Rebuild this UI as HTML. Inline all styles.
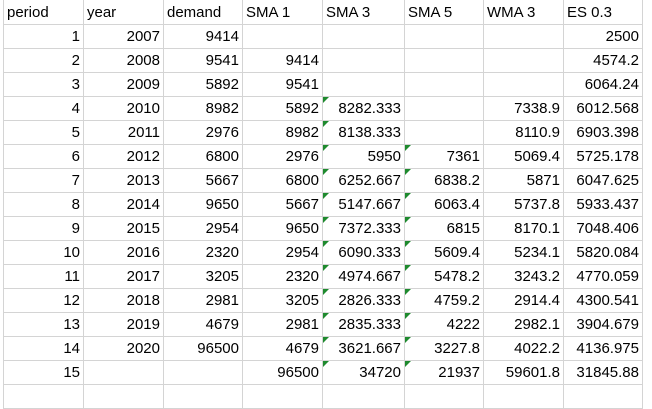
<!DOCTYPE html><html><head><style>
body{margin:0;width:652px;height:408px;overflow:hidden;background:#fff;font-family:"Liberation Sans",Arial,sans-serif;font-size:15px;color:#000}
table{border-collapse:collapse;position:absolute;left:3px;top:0;table-layout:fixed}
tr{height:24px}
td{border:1px solid #d4d4d4;height:24px;padding:2px 3px 0 3px;text-align:right;white-space:nowrap;position:relative;overflow:hidden;box-sizing:border-box;line-height:20px}
tr:first-child td{text-align:left;border-top:none}
td.g::before{content:"";position:absolute;left:0;top:0;border-top:6px solid #1e8a2e;border-right:6px solid transparent}
</style></head><body>
<table>
<colgroup><col style="width:80px"><col style="width:80px"><col style="width:79px"><col style="width:80px"><col style="width:82px"><col style="width:79px"><col style="width:80px"><col style="width:79px"></colgroup>
<tr><td>period</td><td>year</td><td>demand</td><td>SMA 1</td><td>SMA 3</td><td>SMA 5</td><td>WMA 3</td><td>ES 0.3</td></tr>
<tr><td>1</td><td>2007</td><td>9414</td><td></td><td></td><td></td><td></td><td>2500</td></tr>
<tr><td>2</td><td>2008</td><td>9541</td><td>9414</td><td></td><td></td><td></td><td>4574.2</td></tr>
<tr><td>3</td><td>2009</td><td>5892</td><td>9541</td><td></td><td></td><td></td><td>6064.24</td></tr>
<tr><td>4</td><td>2010</td><td>8982</td><td>5892</td><td class="g">8282.333</td><td></td><td>7338.9</td><td>6012.568</td></tr>
<tr><td>5</td><td>2011</td><td>2976</td><td>8982</td><td class="g">8138.333</td><td></td><td>8110.9</td><td>6903.398</td></tr>
<tr><td>6</td><td>2012</td><td>6800</td><td>2976</td><td class="g">5950</td><td class="g">7361</td><td>5069.4</td><td>5725.178</td></tr>
<tr><td>7</td><td>2013</td><td>5667</td><td>6800</td><td class="g">6252.667</td><td class="g">6838.2</td><td>5871</td><td>6047.625</td></tr>
<tr><td>8</td><td>2014</td><td>9650</td><td>5667</td><td class="g">5147.667</td><td class="g">6063.4</td><td>5737.8</td><td>5933.437</td></tr>
<tr><td>9</td><td>2015</td><td>2954</td><td>9650</td><td class="g">7372.333</td><td class="g">6815</td><td>8170.1</td><td>7048.406</td></tr>
<tr><td>10</td><td>2016</td><td>2320</td><td>2954</td><td class="g">6090.333</td><td class="g">5609.4</td><td>5234.1</td><td>5820.084</td></tr>
<tr><td>11</td><td>2017</td><td>3205</td><td>2320</td><td class="g">4974.667</td><td class="g">5478.2</td><td>3243.2</td><td>4770.059</td></tr>
<tr><td>12</td><td>2018</td><td>2981</td><td>3205</td><td class="g">2826.333</td><td class="g">4759.2</td><td>2914.4</td><td>4300.541</td></tr>
<tr><td>13</td><td>2019</td><td>4679</td><td>2981</td><td class="g">2835.333</td><td class="g">4222</td><td>2982.1</td><td>3904.679</td></tr>
<tr><td>14</td><td>2020</td><td>96500</td><td>4679</td><td class="g">3621.667</td><td class="g">3227.8</td><td>4022.2</td><td>4136.975</td></tr>
<tr><td>15</td><td></td><td></td><td>96500</td><td class="g">34720</td><td class="g">21937</td><td>59601.8</td><td>31845.88</td></tr>
<tr><td></td><td></td><td></td><td></td><td></td><td></td><td></td><td></td></tr>
</table>
</body></html>
